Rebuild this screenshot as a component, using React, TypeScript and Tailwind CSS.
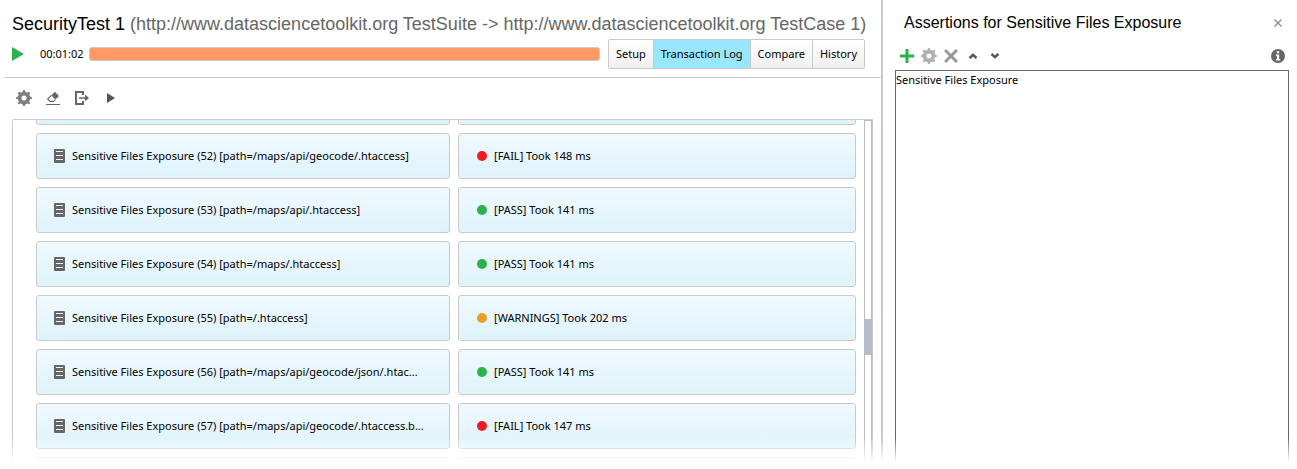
import type { ReactNode } from 'react'
import clsx from 'clsx'

type Status = 'FAIL' | 'PASS' | 'WARNINGS'

interface LogEntry {
  id: number
  path: string
  status: Status
  ms: number
}

const entries: LogEntry[] = [
  { id: 52, path: '[path=/maps/api/geocode/.htaccess]', status: 'FAIL', ms: 148 },
  { id: 53, path: '[path=/maps/api/.htaccess]', status: 'PASS', ms: 141 },
  { id: 54, path: '[path=/maps/.htaccess]', status: 'PASS', ms: 141 },
  { id: 55, path: '[path=/.htaccess]', status: 'WARNINGS', ms: 202 },
  { id: 56, path: '[path=/maps/api/geocode/json/.htac...', status: 'PASS', ms: 141 },
  { id: 57, path: '[path=/maps/api/geocode/.htaccess.b...', status: 'FAIL', ms: 147 },
]

const tabs = ['Setup', 'Transaction Log', 'Compare', 'History']

const dotColor: Record<Status, string> = {
  FAIL: 'bg-[#ed1c24]',
  PASS: 'bg-[#2bb24c]',
  WARNINGS: 'bg-[#eb9f25]',
}

const cellClass =
  'flex h-[46px] items-center rounded-[3px] border border-[#c9c9c9] bg-linear-to-b from-[#f0f9ff] to-[#def3fb]'

function GearIcon({ className }: { className?: string }) {
  return (
    <svg width="16" height="16" viewBox="0 0 16 16" fill="none" stroke="currentColor" className={className}>
      <circle cx="8" cy="8" r="4.4" strokeWidth="3.8" />
      <path
        d="M8 1.200v2M8 12.800v2M1.200 8h2M12.800 8h2M3.200 3.200l1.200 1.200M11.600 11.600l1.200 1.200M3.200 12.800l1.200-1.200M11.600 4.400l1.200-1.200"
        strokeWidth="2.6"
        strokeLinecap="round"
      />
    </svg>
  )
}

function EraserIcon() {
  return (
    <svg width="16" height="16" viewBox="0 0 16 16">
      <path d="M9.800 1.800 14 6 10.400 9.600 6.200 5.400z" fill="#666" />
      <path d="M6.200 5.400 2.600 9l2.400 2.400h3.400l2-1.800" fill="none" stroke="#666" strokeWidth="1.1" />
      <path d="M1 14.500h14" stroke="#666" />
    </svg>
  )
}

function ExportIcon() {
  return (
    <svg width="16" height="16" viewBox="0 0 16 16" fill="none" stroke="#666">
      <path d="M9 5V2H2v12h7v-3" strokeWidth="2" />
      <path d="M5 8h7" strokeWidth="1.500" />
      <path d="M11 4.500 15 8l-4 3.500z" fill="#666" stroke="none" />
    </svg>
  )
}

function DocumentIcon() {
  return (
    <svg width="11" height="14" viewBox="0 0 11 14" className="shrink-0">
      <rect width="11" height="14" rx="1" fill="#666" />
      <path d="M2 2.5h7M2 6.5h7M2 10.5h7" stroke="#f0f9ff" />
    </svg>
  )
}

function IconButton({ label, children }: { label: string; children: ReactNode }) {
  return (
    <button type="button" aria-label={label} className="flex size-4 items-center justify-center">
      {children}
    </button>
  )
}

function LogRow({ entry }: { entry: LogEntry }) {
  return (
    <li className="flex gap-2">
      <div className={clsx(cellClass, 'w-[414px] shrink-0 gap-[7px] px-[17px]')}>
        <DocumentIcon />
        <span className="whitespace-nowrap">
          Sensitive Files Exposure ({entry.id}) {entry.path}
        </span>
      </div>
      <div className={clsx(cellClass, 'flex-1 gap-[7px] px-[18px]')}>
        <span className={clsx('size-[10px] rounded-full', dotColor[entry.status])} />
        <span>
          [{entry.status}] Took {entry.ms} ms
        </span>
      </div>
    </li>
  )
}

function EmptyRow() {
  return (
    <li className="flex gap-2">
      <div className={clsx(cellClass, 'w-[414px] shrink-0')} />
      <div className={clsx(cellClass, 'flex-1')} />
    </li>
  )
}

function TransactionLog() {
  return (
    <div className="ml-3 mr-2 flex min-h-0 flex-1 overflow-hidden rounded-tl-xs border border-b-0 border-[#c9c9c9]">
      <ul className="-mt-[41px] ml-[23px] mr-2 flex flex-1 flex-col gap-2">
        <EmptyRow />
        {entries.map((entry) => (
          <LogRow key={entry.id} entry={entry} />
        ))}
        <EmptyRow />
      </ul>
      <div className="w-2 border border-b-0 border-[#b6bccc] pt-[198px]">
        <div className="h-9 bg-[#b6bccc]" />
      </div>
    </div>
  )
}

function TestPanel() {
  return (
    <main className="flex min-w-0 flex-1 flex-col">
      <h1 className="px-3 pt-3 text-[18px] leading-6 whitespace-nowrap text-[#666] font-['Liberation_Sans',Arial,sans-serif]">
        <span className="text-black">SecurityTest 1</span> (http://www.datasciencetoolkit.org TestSuite -&gt;
        http://www.datasciencetoolkit.org TestCase 1)
      </h1>
      <div className="ml-1 flex items-center border-b border-[#c9c9c9] pt-[3px] pr-4 pb-2 pl-2">
        <button type="button" aria-label="Run test">
          <svg width="12" height="14" viewBox="0 0 12 14">
            <path d="M0 0 12 7 0 14z" fill="#2bb24c" />
          </svg>
        </button>
        <span className="ml-4 w-[49px]">00:01:02</span>
        <div
          role="progressbar"
          aria-label="Progress"
          className="h-[14px] flex-1 rounded-[3px] border border-[#c9c9c9] bg-[#ff9966]"
        />
        <div className="ml-2 flex h-[30px] divide-x divide-[#c9c9c9] overflow-hidden rounded-xs border border-[#c9c9c9]">
          {tabs.map((tab) => (
            <button
              key={tab}
              type="button"
              className={clsx(
                'px-[7px]',
                tab === 'Transaction Log' ? 'bg-[#99e6ff]' : 'bg-linear-to-b from-white to-[#f0f0f0]',
              )}
            >
              {tab}
            </button>
          ))}
        </div>
      </div>
      <div className="flex h-[41px] items-center gap-[13px] px-4 pb-0.5">
        <IconButton label="Options">
          <GearIcon className="text-[#808080]" />
        </IconButton>
        <IconButton label="Clear log">
          <EraserIcon />
        </IconButton>
        <IconButton label="Export">
          <ExportIcon />
        </IconButton>
        <IconButton label="Run">
          <svg width="8" height="10" viewBox="0 0 8 10">
            <path d="M0 0 8 5 0 10z" fill="#555" />
          </svg>
        </IconButton>
      </div>
      <TransactionLog />
    </main>
  )
}

function AssertionsPanel() {
  return (
    <aside className="flex w-[416px] shrink-0 flex-col border-l-2 border-[#c9c9c9] pr-2 pl-3">
      <div className="flex items-center justify-between pt-[11px] pr-[7px] pl-[9px]">
        <h2 className="text-[16px] leading-6 font-['Liberation_Sans',Arial,sans-serif]">
          Assertions for Sensitive Files Exposure
        </h2>
        <button type="button" aria-label="Close">
          <svg width="8" height="8" viewBox="0 0 8 8" stroke="#888" strokeWidth="1.3">
            <path d="M.5.5l7 7M7.5.5l-7 7" />
          </svg>
        </button>
      </div>
      <div className="flex h-[35px] items-center gap-[6px] pt-[7px] pr-1 pl-1">
        <IconButton label="Add assertion">
          <svg width="14" height="14" viewBox="0 0 14 14" stroke="#2bb24c" strokeWidth="3">
            <path d="M7 0v14M0 7h14" />
          </svg>
        </IconButton>
        <IconButton label="Configure">
          <GearIcon className="text-[#b0b0b0]" />
        </IconButton>
        <IconButton label="Remove">
          <svg width="14" height="14" viewBox="0 0 14 14" stroke="#999" strokeWidth="3">
            <path d="M1 1l12 12M13 1 1 13" />
          </svg>
        </IconButton>
        <IconButton label="Move up">
          <svg width="10" height="8" viewBox="0 0 10 8" fill="none" stroke="#555" strokeWidth="2.400">
            <path d="M1.500 6 5 2.800 8.500 6" />
          </svg>
        </IconButton>
        <IconButton label="Move down">
          <svg width="10" height="8" viewBox="0 0 10 8" fill="none" stroke="#555" strokeWidth="2.400">
            <path d="M1.500 2 5 5.200 8.500 2" />
          </svg>
        </IconButton>
        <button type="button" aria-label="Help" className="ml-auto">
          <svg width="14" height="14" viewBox="0 0 14 14">
            <circle cx="7" cy="7" r="7" fill="#666" />
            <path d="M5.800 2.300h2.400v2H5.800zM5 5.500h3.200v4.500H9.200v1.400H4.900v-1.400h1V6.900H5z" fill="#fff" />
          </svg>
        </button>
      </div>
      <ul className="flex-1 border border-b-0 border-[#666]">
        <li>Sensitive Files Exposure</li>
      </ul>
    </aside>
  )
}

export default function App() {
  return (
    <div className="relative flex h-screen overflow-hidden bg-white text-[11px] leading-[18px] text-black font-['Noto_Sans','Open_Sans',sans-serif]">
      <TestPanel />
      <AssertionsPanel />
      <div className="pointer-events-none absolute inset-x-0 bottom-0 h-8 bg-linear-to-t from-white from-20% to-transparent" />
    </div>
  )
}
